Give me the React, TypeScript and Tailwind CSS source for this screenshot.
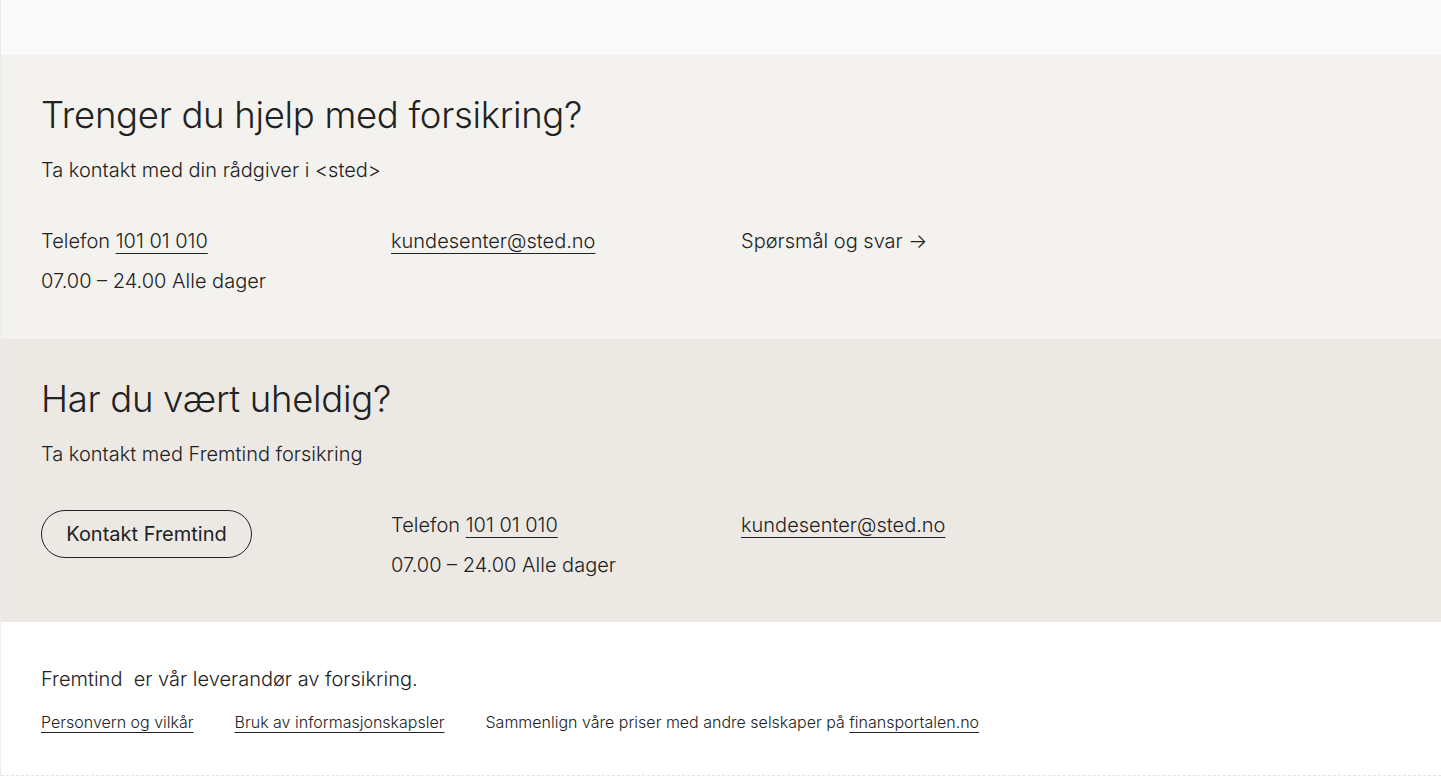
const font = { fontFamily: 'Inter, "Noto Sans", sans-serif' }

function Phone() {
  return (
    <div className="flex flex-col gap-[14px]">
      <p>
        Telefon{' '}
        <a href="#" className="underline underline-offset-[5px] decoration-1">
          101 01 010
        </a>
      </p>
      <p>07.00 – 24.00 Alle dager</p>
    </div>
  )
}

function Email() {
  return (
    <a href="#" className="underline underline-offset-[5px] decoration-1 self-start">
      kundesenter@sted.no
    </a>
  )
}

export default function App() {
  return (
    <div
      className="w-[1441px] min-h-[776px] flex flex-col text-[#222] font-light border-l border-[#ececec]"
      style={font}
    >
      <div className="h-[55px] bg-[#f9f9f9]" />

      <section className="h-[284px] bg-[#f3f2ef] px-[40px] pt-[37px]">
        <h2 className="text-[36.5px] leading-[46px] tracking-[-0.3px]">Trenger du hjelp med forsikring?</h2>
        <p className="mt-[18px] text-[20px] leading-[28px]">Ta kontakt med din rådgiver i &lt;sted&gt;</p>
        <div className="mt-[44px] grid grid-cols-[350px_350px_350px] text-[20px] leading-[26px]">
          <Phone />
          <Email />
          <a href="#" className="self-start">
            Spørsmål og svar →
          </a>
        </div>
      </section>

      <section className="h-[283px] bg-[#ece8e3] px-[40px] pt-[37px]">
        <h2 className="text-[36.5px] leading-[46px] tracking-[-0.3px]">Har du vært uheldig?</h2>
        <p className="mt-[18px] text-[20px] leading-[28px]">Ta kontakt med Fremtind forsikring</p>
        <div className="mt-[44px] grid grid-cols-[350px_350px_350px] text-[20px] leading-[26px]">
          <button className="self-start -mt-[2px] w-[211px] h-[48px] rounded-full border border-[#222] text-[20px] font-normal">
            Kontakt Fremtind
          </button>
          <Phone />
          <Email />
        </div>
      </section>

      <footer className="flex-1 bg-white px-[40px] pt-[43px] pb-[40px] border-b border-dashed border-[#e5e5e5]">
        <p className="text-[20px] leading-[28px]">Fremtind&nbsp; er vår leverandør av forsikring.</p>
        <div className="mt-[17px] flex gap-[41px] text-[16px] leading-[24px]">
          <a href="#" className="underline underline-offset-[4px] decoration-1">Personvern og vilkår</a>
          <a href="#" className="underline underline-offset-[4px] decoration-1">Bruk av informasjonskapsler</a>
          <span>
            Sammenlign våre priser med andre selskaper på{' '}
            <a href="#" className="underline underline-offset-[4px] decoration-1">finansportalen.no</a>
          </span>
        </div>
      </footer>
    </div>
  )
}
